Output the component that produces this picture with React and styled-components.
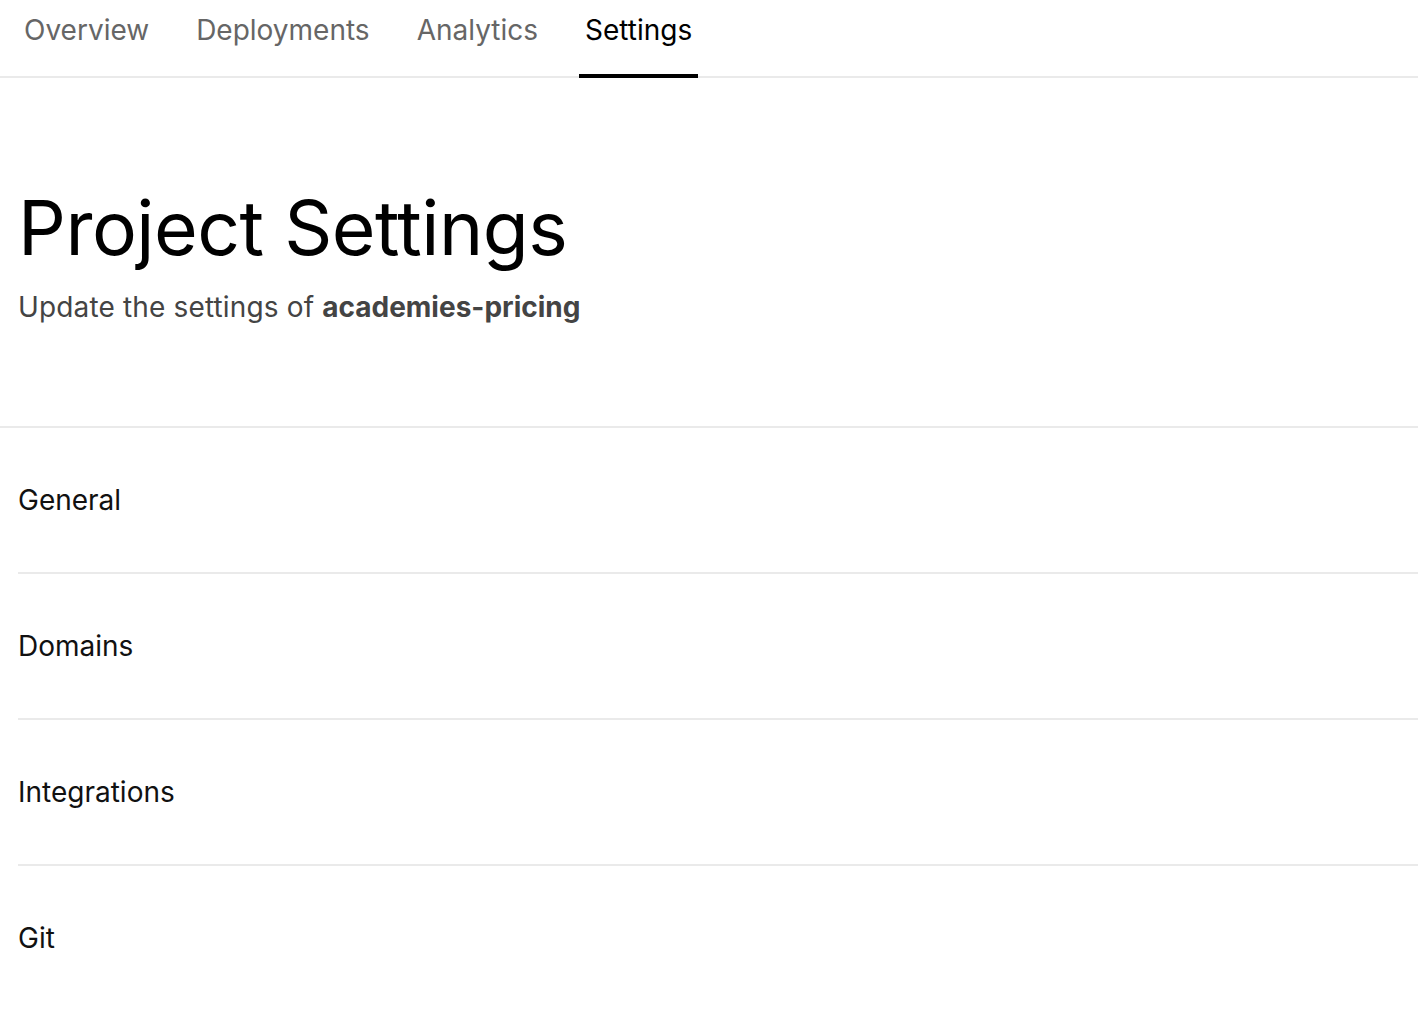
import React from "react";
import styled, { createGlobalStyle } from "styled-components";

const GlobalStyle = createGlobalStyle`
  * { box-sizing: border-box; }
  html, body { margin: 0; padding: 0; background: #fff; }
  body {
    font-family: Inter, "Noto Sans", "Liberation Sans", sans-serif;
    color: #000;
    -webkit-font-smoothing: antialiased;
  }
`;

const Page = styled.div`
  width: 100%;
  min-height: 100vh;
  background: #fff;
`;

const TabBar = styled.nav`
  display: flex;
  gap: 35px;
  padding: 0 18px;
  border-bottom: 2px solid #eaeaea;
`;

const Tab = styled.a`
  position: relative;
  display: block;
  padding: 13px 6px 29px;
  font-size: 28px;
  line-height: 34px;
  color: ${(p) => (p.$active ? "#000" : "#666")};
  text-decoration: none;
  cursor: pointer;

  &::after {
    content: "";
    position: absolute;
    left: 0;
    right: 0;
    bottom: -2px;
    height: 4px;
    background: ${(p) => (p.$active ? "#000" : "transparent")};
  }
`;

const Header = styled.header`
  padding: 102px 18px 102px;
  border-bottom: 2px solid #eaeaea;
`;

const Title = styled.h1`
  margin: 0;
  font-size: 75px;
  line-height: 96px;
  font-weight: 400;
  letter-spacing: -0.5px;
  color: #000;
`;

const Subtitle = styled.p`
  margin: 14px 0 0;
  font-size: 28px;
  line-height: 34px;
  letter-spacing: 0.15px;
  color: #444;

  strong {
    font-weight: 700;
    letter-spacing: 0;
    color: #444;
  }
`;

const List = styled.ul`
  list-style: none;
  margin: 0;
  padding: 0 0 0 18px;
`;

const Row = styled.li`
  display: flex;
  align-items: center;
  height: 146px;
  border-bottom: 2px solid #eaeaea;
  font-size: 28px;
  line-height: 34px;
  color: #111;
`;

const tabs = ["Overview", "Deployments", "Analytics", "Settings"];
const sections = ["General", "Domains", "Integrations", "Git"];

export default function App() {
  return (
    <Page>
      <GlobalStyle />
      <TabBar>
        {tabs.map((t) => (
          <Tab key={t} $active={t === "Settings"}>
            {t}
          </Tab>
        ))}
      </TabBar>
      <Header>
        <Title>Project Settings</Title>
        <Subtitle>
          Update the settings of <strong>academies-pricing</strong>
        </Subtitle>
      </Header>
      <List>
        {sections.map((s) => (
          <Row key={s}>{s}</Row>
        ))}
      </List>
    </Page>
  );
}
